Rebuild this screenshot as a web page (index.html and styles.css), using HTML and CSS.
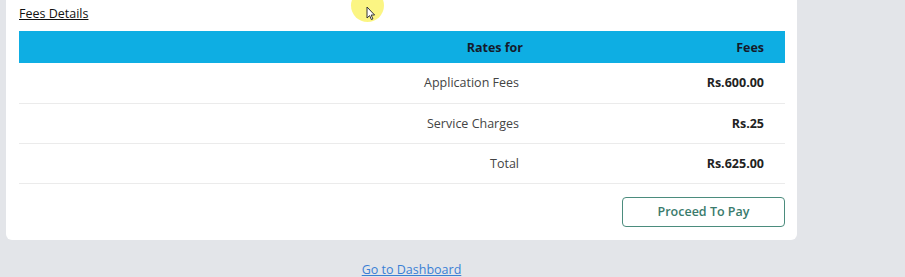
FILE: index.html
```html
<html charset="UTF-8">

<head>
  <link rel="stylesheet" href="styles.css">
</head>

<body>
  <div id="container">
    <div class="card">
      <h4 class="card_title">Fees Details</h4>
      <table class="fees_table">
        <thead>
          <tr>
            <th class="col_rate">Rates for</th>
            <th class="col_fee">Fees</th>
          </tr>
        </thead>
        <tbody>
          <tr>
            <td class="col_rate">Application Fees</td>
            <td class="col_fee">Rs.600.00</td>
          </tr>
          <tr>
            <td class="col_rate">Service Charges</td>
            <td class="col_fee">Rs.25</td>
          </tr>
          <tr>
            <td class="col_rate">Total</td>
            <td class="col_fee">Rs.625.00</td>
          </tr>
        </tbody>
      </table>
      <div class="pay_row">
        <button class="pay_btn">Proceed To Pay</button>
      </div>
    </div>
    <div class="dash_row">
      <a href="#" class="dash_link">Go to Dashboard</a>
    </div>
  </div>
  <div class="cursor_spot">
    <svg class="cursor_arrow" width="10" height="15" viewBox="0 0 10 15">
      <path d="M1 1 L1 12 L3.6 9.6 L5.4 13.6 L6.9 12.9 L5.2 9 L8.6 9 Z" fill="#fff" stroke="#333" stroke-width="1" stroke-linejoin="round" />
    </svg>
  </div>
</body>

</html>
```

FILE: styles.css
```css
body {
  margin: 0;
  background-color: #e3e5e9;
  font-family: "Open Sans", "Noto Sans", sans-serif;
  color: #333;
}

#container {
  display: flex;
  flex-direction: column;
  width: 791px;
  margin-left: 6px;
}

.card {
  background-color: #fff;
  border-radius: 0 0 6px 6px;
  padding: 5px 12px 13px 13px;
}

.card_title {
  margin: 0 0 8px 0;
  font-size: 12.5px;
  font-weight: 500;
  line-height: 18px;
  color: #111;
  text-decoration: underline;
}

.fees_table {
  width: 100%;
  border-collapse: collapse;
  font-size: 12.5px;
}

.fees_table th {
  background-color: #0eaee3;
  color: #151a2a;
  font-weight: 700;
  height: 32px;
  padding: 0;
}

.fees_table td {
  height: 40px;
  padding: 0;
  border-bottom: 1px solid #ebebeb;
  color: #444;
}

.fees_table .col_rate {
  width: 500px;
  text-align: right;
}

.fees_table th.col_rate {
  padding-right: 5px;
}

.fees_table td.col_rate {
  padding-right: 9px;
}

.fees_table .col_fee {
  text-align: right;
  padding-right: 21px;
}

.fees_table td.col_fee {
  font-weight: 700;
  color: #222;
}

.pay_row {
  display: flex;
  justify-content: flex-end;
  margin-top: 13px;
}

.pay_btn {
  width: 163px;
  height: 30px;
  background-color: #fff;
  border: 1px solid #4b8c7d;
  border-radius: 4px;
  color: #3a7b6c;
  font-family: "Open Sans", "Noto Sans", sans-serif;
  font-size: 12.5px;
  font-weight: 600;
}

.dash_row {
  display: flex;
  justify-content: center;
  margin-top: 21px;
}

.dash_link {
  color: #3a7fd5;
  font-size: 12.5px;
  margin-left: 20px;
}

.cursor_spot {
  position: absolute;
  left: 351px;
  top: -11px;
  width: 33px;
  height: 33px;
  border-radius: 50%;
  background-color: rgba(250, 242, 90, 0.75);
}

.cursor_arrow {
  position: absolute;
  left: 15px;
  top: 17px;
}
```
